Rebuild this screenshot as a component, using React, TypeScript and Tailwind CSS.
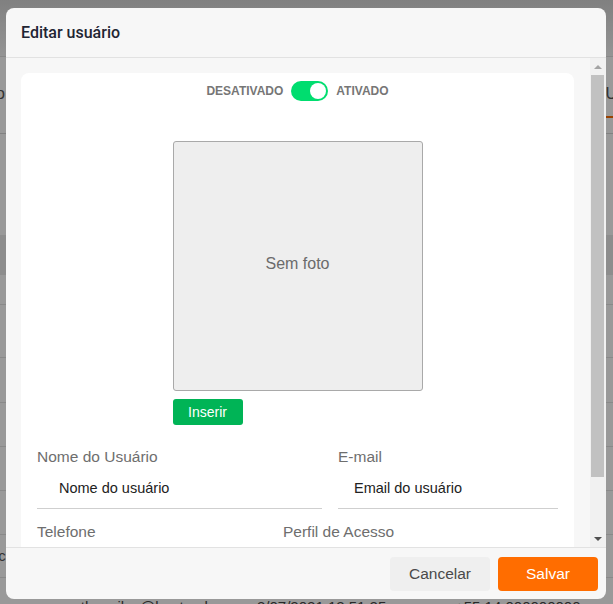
import React from "react";

function Field({ label, value, indent }: { label: string; value: string; indent: string }) {
  return (
    <div className="flex flex-col">
      <div className="h-[20px] leading-[20px] text-[15.5px] text-[#6e6e6e]">{label}</div>
      <div className={`mt-[11px] pb-[10px] border-b border-[#cfcfcf] ${indent}`}>
        <div className="h-[20px] leading-[20px] text-[14.5px] text-[#222222]">{value}</div>
      </div>
    </div>
  );
}

export default function App() {
  return (
    <div className="relative w-[613px] h-[604px] overflow-hidden bg-white font-['Liberation_Sans',Arial,sans-serif]">
      {/* page behind the modal */}
      <div className="flex flex-col text-[14px] text-[#444]">
        <div className="h-[57px] bg-linear-to-b from-[#d6d6d6] to-[#f7f7f7] border-b border-[#e2e2e2]" />
        <div className="h-[77px] flex justify-between items-start border-b border-[#d8d8d8]">
          <span className="mt-[25px] -ml-[4px] text-[16px] text-[#555]">o</span>
          <div className="flex flex-col items-end">
            <span className="mt-[25px] mr-[-4px] text-[16px] text-[#555]">U</span>
            <div className="mt-[10px] w-[30px] h-[2px] bg-[#ff6d00]" />
          </div>
        </div>
        <div className="h-[101px]" />
        <div className="h-[40px] bg-[#ececec]" />
        <div className="h-[30px] border-b border-[#e4e4e4]" />
        <div className="h-[53px] border-b border-[#e4e4e4]" />
        <div className="h-[45px] border-b border-[#e4e4e4]" />
        <div className="h-[44px] border-b border-[#e4e4e4]" />
        <div className="h-[44px] border-b border-[#e4e4e4]" />
        <div className="h-[44px] border-b border-[#e4e4e4]" />
        <div className="h-[43px] border-b border-[#e4e4e4] flex items-center">
          <span className="-ml-[5px] text-[15px] text-[#555]">ic</span>
        </div>
        <div className="h-[30px] flex items-start pt-[18px] text-[15px] text-[#444] whitespace-nowrap">
          <span className="ml-[60px] w-[175px] overflow-hidden text-ellipsis">matheusilva@bestcode.com.br</span>
          <span className="ml-[22px] w-[130px] overflow-hidden">3/07/2021 12:51:25</span>
          <span className="ml-[68px] w-[125px] overflow-hidden">+55 14 000000000</span>
        </div>
      </div>
      <div className="absolute inset-0 bg-black/40" />

      {/* modal */}
      <div className="absolute left-[6px] top-[8px] w-[600px] h-[591px] rounded-[8px] bg-[#f7f7f7] flex flex-col overflow-hidden">
        <div className="h-[50px] shrink-0 border-b border-[#e2e2e2] flex items-center pl-[15px]">
          <span className="font-['Roboto',sans-serif] font-medium text-[16px] text-[#1f2533]">Editar usuário</span>
        </div>

        <div className="h-[489px] shrink-0 flex">
          <div className="flex-1 pl-[15px] pt-[15px] pr-[16px] overflow-hidden">
            <div className="bg-white rounded-[8px] h-[600px] px-[16px] pt-[8px] flex flex-col">
              <div className="flex items-center justify-center gap-2 h-[20px]">
                <span className="text-[12px] font-bold text-[#767676]">DESATIVADO</span>
                <div className="w-[37px] h-[20px] rounded-full bg-[#00dd6f] flex items-center justify-end pr-[2px]">
                  <div className="w-[16px] h-[16px] rounded-full bg-white" />
                </div>
                <span className="text-[12px] font-bold text-[#767676]">ATIVADO</span>
              </div>

              <div className="mt-[40px] self-center flex flex-col items-start">
                <div className="w-[250px] h-[250px] bg-[#eeeeee] border border-[#a9a9a9] rounded-[3px] flex items-center justify-center">
                  <span className="text-[16px] text-[#6b6b6b] -mt-[4px]">Sem foto</span>
                </div>
                <button className="mt-[8px] w-[70px] h-[26px] rounded-[3px] bg-[#00b456] text-white text-[14px] flex items-center justify-center">
                  Inserir
                </button>
              </div>

              <div className="mt-[22px] grid grid-cols-[285px_220px] gap-x-[16px]">
                <Field label="Nome do Usuário" value="Nome do usuário" indent="pl-[22px]" />
                <Field label="E-mail" value="Email do usuário" indent="pl-[16px]" />
              </div>

              <div className="mt-[13px] grid grid-cols-[230px_1fr] gap-x-[16px]">
                <div className="h-[20px] leading-[20px] text-[15.5px] text-[#6e6e6e]">Telefone</div>
                <div className="h-[20px] leading-[20px] text-[15.5px] text-[#6e6e6e]">Perfil de Acesso</div>
              </div>
            </div>
          </div>

          <div className="w-[16px] shrink-0 bg-[#f1f1f1] flex flex-col">
            <div className="h-[17px] flex items-center justify-center">
              <div className="w-0 h-0 border-x-[4px] border-x-transparent border-b-[4px] border-b-[#a3a3a3]" />
            </div>
            <div className="ml-[1px] w-[13px] h-[402px] bg-[#c1c1c1]" />
            <div className="flex-1" />
            <div className="h-[17px] flex items-center justify-center">
              <div className="w-0 h-0 border-x-[4px] border-x-transparent border-t-[4px] border-t-[#505050]" />
            </div>
          </div>
        </div>

        <div className="flex-1 border-t border-[#e2e2e2] flex items-center justify-end gap-2 pr-[8px]">
          <button className="w-[100px] h-[34px] rounded-[4px] bg-[#efefef] text-[15.5px] text-[#4a4a4a]">Cancelar</button>
          <button className="w-[100px] h-[34px] rounded-[4px] bg-[#ff6d00] text-[15.5px] text-white">Salvar</button>
        </div>
      </div>
    </div>
  );
}
